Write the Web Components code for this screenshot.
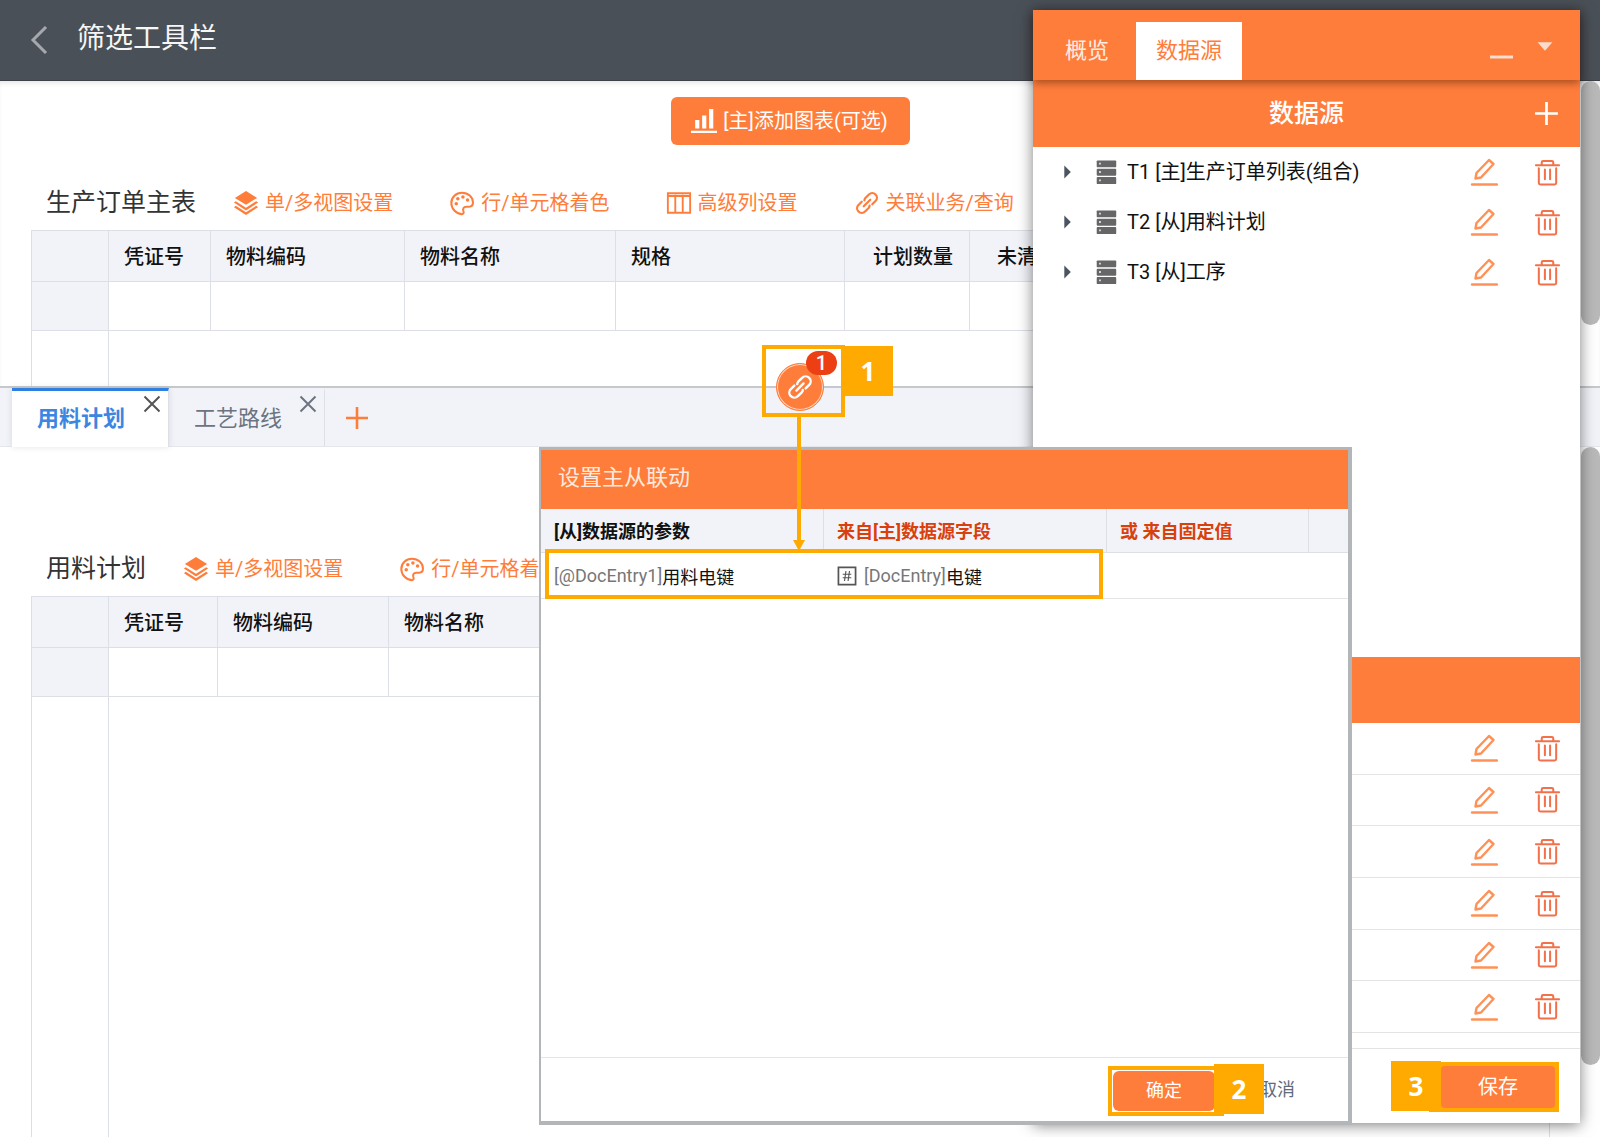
<!DOCTYPE html>
<html lang="zh-CN">
<head>
<meta charset="utf-8">
<meta name="viewport" content="width=device-width, initial-scale=1">
<title>筛选工具栏</title>
<style>
  :root {
    --brand: #ff7d3b;
    --mark: #ffaa00;
    --line: #dddfe7;
    --soft: #f2f3f8;
    --danger: #d9400b;
  }
  html, body { height: 100%; }
  body {
    margin: 0;
    overflow: hidden;
    background: #fff;
    color: #111;
    font-family: Roboto, "Noto Sans CJK SC", sans-serif;
    font-size: 20px;
  }
</style>
</head>
<body>
<report-designer></report-designer>

<script>
const BASE = `
  *, *::before, *::after { box-sizing: border-box; }
  button { font: inherit; color: inherit; background: none; border: 0; padding: 0; margin: 0; cursor: pointer; }
  ul { list-style: none; margin: 0; padding: 0; }
  h1, h2, h3 { margin: 0; font-weight: 400; }
`;

function define(name, markup) {
  customElements.define(name, class extends HTMLElement {
    connectedCallback() {
      if (this.shadowRoot) return;
      const root = this.attachShadow({ mode: 'open' });
      root.innerHTML = typeof markup === 'function' ? markup(this) : markup;
    }
  });
}

const ICONS = {
  back: '<path d="M20 1 7 14l13 13" fill="none" stroke="currentColor" stroke-width="3"/>',
  layers: '<g fill="currentColor"><path d="M14 1 26 8.500 14 16 2 8.500z"/><path d="M1 13.500 3 12l11 7 11-7 2 1.500-13 8.500z"/><path d="M1 18.500 3 17l11 7 11-7 2 1.500L14 27z"/></g>',
  palette: '<path d="M14 3C7.500 3 2.500 7.800 2.500 14S7.500 25.500 13.500 26c2 .1 2.800-1.600 2-3.300-1-2.300.3-4.700 3-4.700h3.200c2.500 0 4.100-2 4.100-4.500C25.800 7.500 20.500 3 14 3z" fill="none" stroke="currentColor" stroke-width="2.200"/><g fill="currentColor"><circle cx="7.800" cy="14.800" r="1.900"/><circle cx="9.500" cy="9.500" r="1.900"/><circle cx="15" cy="7.600" r="1.900"/><circle cx="20" cy="10.800" r="1.900"/></g>',
  columns: '<path d="M2 3.500h24v21H2zM2 6.500h24M10 5v19M18 5v19" fill="none" stroke="currentColor" stroke-width="2"/>',
  link: '<g transform="rotate(-45 14 14)" fill="none" stroke="currentColor" stroke-width="2.400" stroke-linecap="round"><path d="M11 9H6a5 5 0 0 0 0 10h5.500a4 4 0 0 0 2.500-1"/><path d="M17 19h5a5 5 0 0 0 0-10h-5.500a4 4 0 0 0-2.500 1"/><path d="M9 14h10"/></g>',
  chart: '<g fill="currentColor"><path d="M4.500 13H9v9H4.500zM12 8h4.500v14H12zM19.500 1H24v21h-4.500zM0 24.500h28v2.500H0z"/></g>',
  plus: '<path d="M14 3v22M3 14h22" fill="none" stroke="currentColor" stroke-width="2.600"/>',
  close: '<path d="m3.500 3.500 21 21M24.500 3.500l-21 21" fill="none" stroke="currentColor" stroke-width="2.800"/>',
  minus: '<path d="M3 24h23" fill="none" stroke="currentColor" stroke-width="3"/>',
  down: '<path d="M6 9h16l-8 9z" fill="currentColor"/>',
  right: '<path d="M10 7v14l7-7z" fill="currentColor"/>',
  server: '<g fill="#666668"><rect x="4" y="1.500" width="21" height="7.500" rx="1"/><rect x="4" y="10.500" width="21" height="7.500" rx="1"/><rect x="4" y="19.500" width="21" height="7.500" rx="1"/></g><g fill="#d8d8d8"><path d="M6.500 4h2v2h-2zM6.500 13h2v2h-2zM6.500 22h2v2h-2z"/></g>',
  pencil: '<g fill="none" stroke="#ff9156" stroke-width="2.400" stroke-linejoin="round" stroke-linecap="round"><path d="M5.500 20.500 6.500 15 19 2l4.500 4-12.500 13.500z"/><path d="M2 26.500h25"/></g>',
  trash: '<g fill="none" stroke="#f2714a" stroke-width="2.100" stroke-linecap="round" stroke-linejoin="round"><path d="M2 6.500h24M8 6V3.500c0-1 .5-1.500 1.500-1.500h9c1 0 1.500.5 1.500 1.500V6M5 9.500V25c0 1 .5 1.500 1.500 1.500h15c1 0 1.500-.5 1.500-1.500V9.500M11.300 11v10M16.700 11v10"/></g>',
  field: '<path d="M2 2h24v24H2z" fill="none" stroke="#555" stroke-width="2.400"/><path d="m12.500 7-2 14M17.500 7l-2 14M8 11.500h12M8 16.500h12" fill="none" stroke="#555" stroke-width="1.600"/>'
};

/* Single icon; size comes from the size attribute. */
define('ui-icon', el => {
  const size = el.getAttribute('size') || 26;
  return `<style>:host{display:inline-flex;flex:none} svg{display:block}</style>
  <svg width="${size}" height="${size}" viewBox="0 0 28 28" aria-hidden="true">${ICONS[el.getAttribute('name')]}</svg>`;
});

/* Numbered step of the walkthrough. */
define('step-mark', `<style>
  :host { display: flex; align-items: center; justify-content: center; width: 50px; height: 50px;
    background: var(--mark); color: #fff; font: 700 26px/50px "Open Sans", "Noto Sans CJK SC", sans-serif; }
</style><slot></slot>`);

define('app-header', `<style>${BASE}
  :host { display: flex; align-items: center; flex: none; height: 81px; padding: 0 26px; gap: 23px;
    background: #4a5057; color: #fff; border-bottom: 1px solid #3d4248; }
  button { color: #a5a9ad; display: flex; }
  h1 { font-size: 28px; line-height: 36px; color: #f6f6f6; padding-bottom: 2px; }
</style>
<button aria-label="返回"><ui-icon name="back" size="28"></ui-icon></button>
<h1><slot></slot></h1>`);

define('tool-link', el => `<style>${BASE}
  :host { display: block; flex: none; }
  button { display: flex; align-items: center; gap: 6px; color: var(--brand); font-size: 20px; line-height: 26px; white-space: nowrap; }
</style><button><ui-icon name="${el.getAttribute('icon')}" size="26"></ui-icon><slot></slot></button>`);

define('grid-toolbar', el => `<style>${BASE}
  :host { display: flex; align-items: center; flex: none; height: 54px; padding-left: 15px; overflow: hidden; }
  h2 { font-size: 25px; line-height: 32px; color: #333; white-space: nowrap; margin-right: 37px; }
  .links { display: flex; gap: 56px; }
</style><h2>${el.getAttribute('heading')}</h2><div class="links"><slot></slot></div>`);

/* Columns are given as "title:width:align", parted by "|". */
define('data-grid', el => {
  const cols = el.getAttribute('columns').split('|').map(c => c.split(':'));
  return `<style>${BASE}
    :host { display: block; flex: 1; min-height: 0; }
    table { table-layout: fixed; width: 100%; height: 100%; border-collapse: separate; border-spacing: 0;
      border-left: 1px solid var(--line); border-top: 1px solid var(--line); }
    th, td { border-right: 1px solid var(--line); border-bottom: 1px solid var(--line); padding: 0 16px 0 15px; }
    th { height: 51px; padding-bottom: 2px; background: var(--soft); font-size: 20px; font-weight: 500; text-align: left; white-space: nowrap; color: #111; }
    th.right { text-align: right; }
    tr.entry td { height: 49px; }
    tr.entry td:first-child { background: var(--soft); }
    tr.rest td { border-bottom: 0; }
  </style>
  <table>
    <colgroup><col style="width:77px">${cols.map(c => `<col style="width:${c[1]}px">`).join('')}<col></colgroup>
    <thead><tr><th></th>${cols.map(c => `<th class="${c[2] || ''}">${c[0]}</th>`).join('')}<th></th></tr></thead>
    <tbody>
      <tr class="entry"><td></td>${cols.map(() => '<td></td>').join('')}<td></td></tr>
      <tr class="rest"><td></td><td colspan="${cols.length + 1}"></td></tr>
    </tbody>
  </table>`;
});

/* Pane with its own scroll thumb at the right. */
define('scroll-pane', `<style>${BASE}
  :host { display: flex; min-height: 0; overflow: hidden; }
  .content { flex: 1; min-width: 0; display: flex; flex-direction: column; }
  .grid { flex: 1; min-height: 0; display: flex; flex-direction: column; padding: 0 31px; }
  .track { flex: none; width: 19px; }
  .thumb { height: var(--thumb); border-radius: 10px; background: #b9b9b9; }
</style>
<div class="content"><slot name="top"></slot><div class="grid"><slot></slot></div></div>
<div class="track"><div class="thumb"></div></div>`);

define('chart-button', `<style>${BASE}
  :host { display: flex; justify-content: center; padding: 16px 0 31px; }
  button { display: flex; align-items: center; gap: 6px; height: 48px; padding: 0 22px 0 20px; border-radius: 6px;
    background: var(--brand); color: #fff; font-size: 20px; line-height: 26px; }
</style><button><ui-icon name="chart" size="26"></ui-icon><slot></slot></button>`);

define('tab-strip', `<style>${BASE}
  :host { display: flex; flex: none; height: 61px; padding-left: 12px; background: var(--soft);
    border-top: 2px solid #c6c8cb; border-bottom: 1px solid #e4e6ec; }
  .tab { display: flex; width: 156px; border-top: 3px solid transparent; border-right: 1px solid var(--line); color: #6b7480; }
  .tab.on { width: 157px; background: #fff; color: #3b86e0; border-top-color: #2f7fe0; margin-bottom: -1px; font-weight: 700;
    box-shadow: 0 0 6px rgba(60,70,100,.15); }
  .name { flex: 1; font-size: 22px; line-height: 54px; padding-left: 25px; text-align: left; white-space: nowrap; }
  .x { flex: none; align-self: flex-start; margin: 3px 6px 0 0; color: #6b7480; }
  .on .x { color: #555; }
  .add { color: var(--brand); padding: 6px 18px 0; }
</style>
<div class="tab on"><button class="name">用料计划</button><button class="x" aria-label="关闭用料计划"><ui-icon name="close" size="20"></ui-icon></button></div>
<div class="tab"><button class="name">工艺路线</button><button class="x" aria-label="关闭工艺路线"><ui-icon name="close" size="20"></ui-icon></button></div>
<button class="add" aria-label="添加"><ui-icon name="plus" size="28"></ui-icon></button>`);

define('row-actions', `<style>${BASE}
  :host { display: flex; align-items: center; gap: 36px; flex: none; padding-right: 19px; }
  button { display: flex; }
</style>
<button aria-label="编辑"><ui-icon name="pencil" size="28"></ui-icon></button>
<button aria-label="删除"><ui-icon name="trash" size="27"></ui-icon></button>`);

define('source-row', `<style>${BASE}
  :host { display: flex; align-items: center; height: 50px; padding-left: 22px; }
  .toggle { display: flex; color: #4a5560; margin-right: 12px; }
  .label { flex: 1; padding-left: 8px; font-size: 20px; line-height: 28px; color: #111; white-space: nowrap; }
</style>
<button class="toggle" aria-label="展开"><ui-icon name="right" size="26"></ui-icon></button>
<ui-icon name="server" size="26"></ui-icon>
<span class="label"><slot></slot></span><row-actions></row-actions>`);

define('source-panel', `<style>${BASE}
  :host { display: flex; flex-direction: column; background: #fff; box-shadow: 0 2px 14px rgba(0,0,0,.5); }
  .tabs { display: flex; flex: none; height: 70px; padding: 12px 22px 0 12px; background: var(--brand); color: #fdeee4;
    position: relative; box-shadow: 0 3px 8px rgba(60,20,0,.45); }
  .tabs .tab { padding: 0 20px; font-size: 22px; line-height: 56px; }
  .tabs .tab.on { background: #fff; color: var(--brand); margin-left: 7px; }
  .win { display: flex; margin-left: auto; gap: 17px; color: #f8dccd; padding-bottom: 9px; align-items: center; }
  .win button { display: flex; }
  .title { display: flex; align-items: center; flex: none; height: 67px; padding: 0 19px; background: var(--brand); color: #fff; }
  .title h2 { flex: 1; text-align: center; font-size: 25px; line-height: 32px; padding-left: 29px; font-weight: 500; }
  .title button { display: flex; }
  .sources { flex: 1; min-height: 0; }
  .bar { flex: none; height: 66px; background: var(--brand); }
  .rows { flex: none; height: 310px; display: grid; grid-template-rows: repeat(6, 1fr); }
  .rows li { display: flex; align-items: center; justify-content: flex-end; border-bottom: 1px solid #e4e4e4; }
  footer { flex: none; margin-top: 15px; height: 75px; border-top: 1px solid #e4e4e4; display: flex; justify-content: flex-end; align-items: flex-start; padding: 13px 21px 0 0; }
  .save { display: flex; position: relative; height: 50px; padding: 4px 4px 4px 12px; background: var(--mark); }
  .save button { width: 114px; border-radius: 4px; background: var(--brand); color: #fff; font-size: 20px; line-height: 40px; }
  .save step-mark { position: absolute; right: 118px; top: -1px; }
</style>
<div class="tabs">
  <button class="tab">概览</button><button class="tab on">数据源</button>
  <div class="win"><button aria-label="最小化"><ui-icon name="minus" size="28"></ui-icon></button><button aria-label="收起"><ui-icon name="down" size="26"></ui-icon></button></div>
</div>
<div class="title"><h2>数据源</h2><button aria-label="添加数据源"><ui-icon name="plus" size="29"></ui-icon></button></div>
<div class="sources">
  <source-row>T1 [主]生产订单列表(组合)</source-row>
  <source-row>T2 [从]用料计划</source-row>
  <source-row>T3 [从]工序</source-row>
</div>
<div class="bar"></div>
<ul class="rows">${'<li><row-actions></row-actions></li>'.repeat(6)}</ul>
<footer><div class="save"><button>保存</button><step-mark>3</step-mark></div></footer>`);

define('link-dialog', `<style>${BASE}
  :host { display: flex; flex-direction: column; background: #fff; border: solid #b3b6b9; border-width: 3px 4px 4px 2px; }
  h2 { flex: none; height: 59px; padding-left: 17px; background: var(--brand); color: #fdeadf; font-size: 22px; line-height: 56px; }
  .body { flex: 1; min-height: 0; position: relative; }
  table { width: 100%; table-layout: fixed; border-collapse: separate; border-spacing: 0; font-size: 18px; }
  th { height: 44px; padding: 0 13px 2px; text-align: left; font-weight: 700; background: var(--soft); white-space: nowrap;
    border-right: 1px solid var(--line); border-bottom: 1px solid var(--line); }
  th:last-child { border-right: 0; }
  th.from { color: var(--danger); }
  td { height: 46px; padding: 0 13px; border-bottom: 1px solid #e6e6e6; white-space: nowrap; }
  .code { color: #777; }
  .cell { display: flex; align-items: center; }
  .cell ui-icon { margin-right: 7px; }
  .focus { position: absolute; left: 4px; right: 245px; top: 40px; height: 50px; border: 4px solid var(--mark); }
  footer { flex: none; height: 64px; border-top: 1px solid #e6e6e6; display: flex; align-items: flex-start; justify-content: flex-end; padding: 8px 53px 0 0; font-size: 18px; }
  .ok { position: relative; width: 116px; height: 50px; border: 4px solid var(--mark); padding: 1px; margin-right: 35px; }
  .ok button { width: 102px; height: 40px; border-radius: 6px; background: var(--brand); color: #fff; line-height: 38px; }
  .ok step-mark { position: absolute; left: 102px; top: -6px; }
  .cancel { color: #5f6b7c; line-height: 48px; }
</style>
<h2>设置主从联动</h2>
<div class="body">
  <table>
    <colgroup><col style="width:283px"><col style="width:283px"><col style="width:202px"><col></colgroup>
    <thead><tr><th>[从]数据源的参数</th><th class="from">来自[主]数据源字段</th><th class="from">或 来自固定值</th><th></th></tr></thead>
    <tbody><tr>
      <td><span class="cell"><span class="code">[@DocEntry1]</span>用料电键</span></td>
      <td><span class="cell"><ui-icon name="field" size="20"></ui-icon><span class="code">[DocEntry]</span>电键</span></td>
      <td></td><td></td>
    </tr></tbody>
  </table>
  <div class="focus"></div>
</div>
<footer>
  <div class="ok"><button>确定</button><step-mark>2</step-mark></div>
  <button class="cancel">取消</button>
</footer>`);

/* Link handle on the splitter, with its arrow down to the dialog. */
define('link-handle', `<style>${BASE}
  :host { display: block; width: 83px; height: 72px; border: 4px solid var(--mark); }
  .round { position: absolute; left: 10px; top: 14px; width: 48px; height: 48px; border-radius: 50%; background: var(--brand);
    color: #fff; display: flex; align-items: center; justify-content: center; border: 1px solid var(--brand); box-shadow: inset 0 0 0 1px #ffd9c4; }
  .badge { position: absolute; left: 40px; top: 2px; width: 31px; height: 24px; border-radius: 12px; background: #ed3f14; color: #fff;
    font-size: 20px; font-weight: 500; line-height: 24px; text-align: center; }
  step-mark { position: absolute; left: 77px; top: -3px; }
  svg { position: absolute; left: 27px; top: 68px; }
</style>
<button class="round" aria-label="主从联动"><ui-icon name="link" size="28"></ui-icon></button>
<span class="badge">1</span>
<step-mark>1</step-mark>
<svg width="12" height="134" viewBox="0 0 12 134" fill="#ffaa00" aria-hidden="true"><path d="M4 0h4v123h4l-6 11-6-11h4z"/></svg>`);

define('report-designer', `<style>${BASE}
  :host { display: flex; flex-direction: column; height: 100vh; position: relative; overflow: hidden; }
  .master { flex: 0 0 305px; --thumb: 244px; box-shadow: inset 0 4px 5px -2px rgba(0,0,0,.1); }
  .detail { flex: 1; --thumb: calc(100% - 72px); }
  .gap { flex: none; height: 95px; }
  source-panel { position: absolute; top: 10px; right: 20px; bottom: 14px; width: 547px; }
  link-dialog { position: absolute; top: 447px; left: calc(50% - 261px); bottom: 12px; width: 813px; }
  link-handle { position: absolute; top: 345px; left: calc(50% - 38px); }
</style>
<app-header>筛选工具栏</app-header>
<scroll-pane class="master">
  <chart-button slot="top">[主]添加图表(可选)</chart-button>
  <grid-toolbar heading="生产订单主表">
    <tool-link icon="layers">单/多视图设置</tool-link>
    <tool-link icon="palette">行/单元格着色</tool-link>
    <tool-link icon="columns">高级列设置</tool-link>
    <tool-link icon="link">关联业务/查询</tool-link>
  </grid-toolbar>
  <data-grid columns="凭证号:102|物料编码:194|物料名称:211|规格:229|计划数量:125:right|未清:84:right"></data-grid>
</scroll-pane>
<tab-strip></tab-strip>
<scroll-pane class="detail">
  <div class="gap" slot="top"></div>
  <grid-toolbar heading="用料计划">
    <tool-link icon="layers">单/多视图设置</tool-link>
    <tool-link icon="palette">行/单元格着色</tool-link>
  </grid-toolbar>
  <data-grid columns="凭证号:109|物料编码:171|物料名称:220"></data-grid>
</scroll-pane>
<source-panel></source-panel>
<link-dialog></link-dialog>
<link-handle></link-handle>`);
</script>
</body>
</html>
